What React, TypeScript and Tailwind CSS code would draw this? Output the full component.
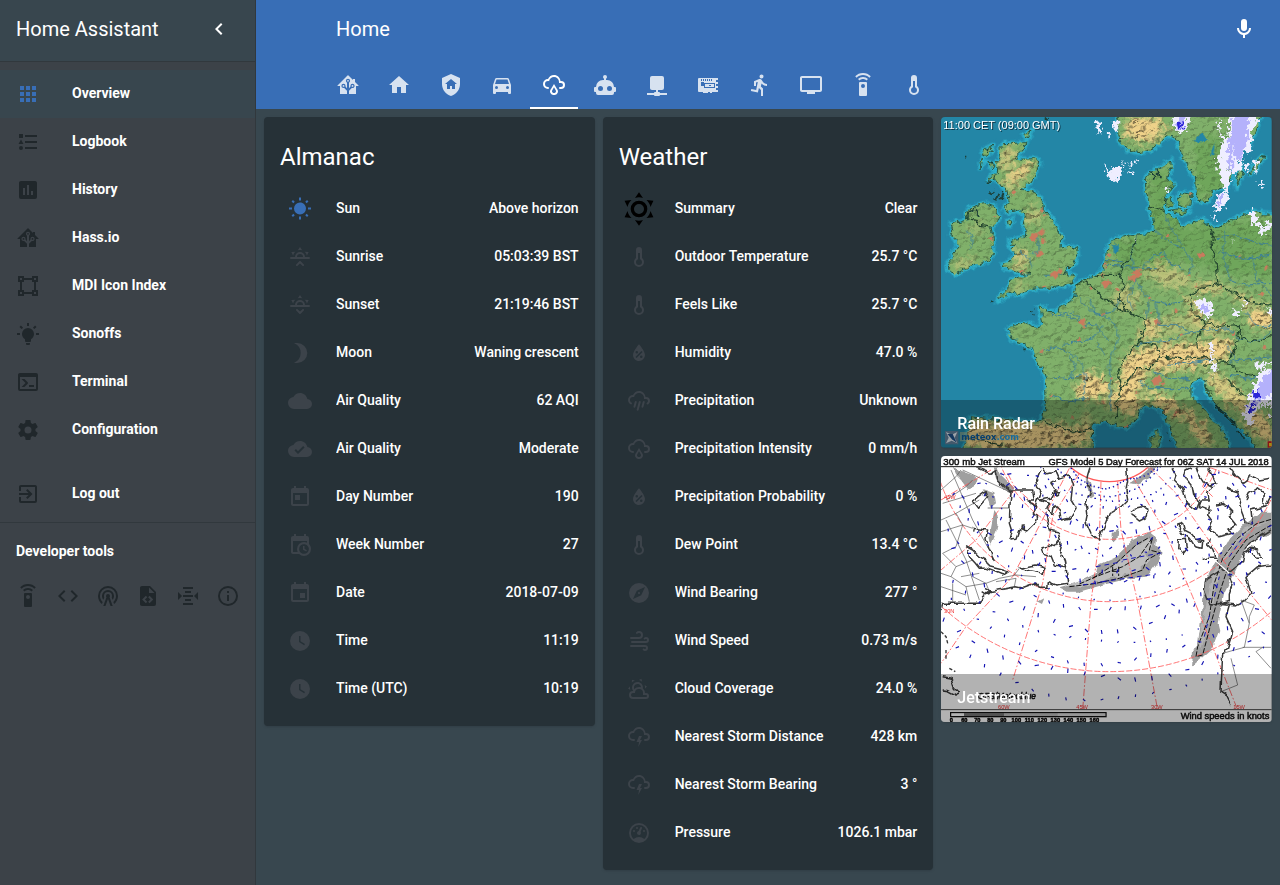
import React from 'react';

const cloudTop =
  'M6,16A5,5 0 0,1 1,11A5,5 0 0,1 6,6C7,3.65 9.3,2 12,2C15.43,2 18.24,4.66 18.5,8.03L19,8A4,4 0 0,1 23,12A4,4 0 0,1 19,16H18A1,1 0 0,1 17,15A1,1 0 0,1 18,14H19A2,2 0 0,0 21,12A2,2 0 0,0 19,10H17V9A5,5 0 0,0 12,4C9.5,4 7.45,5.82 7.06,8.19C6.73,8.07 6.37,8 6,8A3,3 0 0,0 3,11A3,3 0 0,0 6,14';
const horizon =
  'M3,12H7A5,5 0 0,1 12,7A5,5 0 0,1 17,12H21A1,1 0 0,1 22,13A1,1 0 0,1 21,14H3A1,1 0 0,1 2,13A1,1 0 0,1 3,12M15,12A3,3 0 0,0 12,9A3,3 0 0,0 9,12H15M12,2L14.39,5.42C13.65,5.15 12.84,5 12,5C11.16,5 10.35,5.15 9.61,5.42L12,2M3.34,7L7.5,6.65C6.9,7.16 6.36,7.78 5.94,8.5C5.5,9.24 5.25,10 5.11,10.79L3.34,7M20.65,7L18.88,10.79C18.74,10 18.47,9.23 18.05,8.5C17.63,7.78 17.1,7.15 16.5,6.64L20.65,7';
const cloudSolid =
  'M19.35,10.03C18.67,6.59 15.64,4 12,4C9.11,4 6.6,5.64 5.35,8.03C2.34,8.36 0,10.9 0,14A6,6 0 0,0 6,20H19A5,5 0 0,0 24,15C24,12.36 21.95,10.22 19.35,10.03Z';

const icons = {
  apps: 'M16,20H20V16H16M16,14H20V10H16M10,8H14V4H10M16,8H20V4H16M10,14H14V10H10M4,14H8V10H4M4,20H8V16H4M10,20H14V16H10M4,8H8V4H4V8Z',
  list: 'M5,9.5L7.5,14H2.5L5,9.5M3,4H7V8H3V4M5,20A2,2 0 0,0 7,18A2,2 0 0,0 5,16A2,2 0 0,0 3,18A2,2 0 0,0 5,20M9,5V7H21V5H9M9,19H21V17H9V19M9,13H21V11H9V13Z',
  poll: 'M17,17H15V13H17M13,17H11V7H13M9,17H7V10H9M19,3H5C3.89,3 3,3.89 3,5V19A2,2 0 0,0 5,21H19A2,2 0 0,0 21,19V5C21,3.89 20.1,3 19,3Z',
  assistant:
    'M21.8,13H20V21H13V17.67L15.79,14.88L16.5,15C17.66,15 18.6,14.06 18.6,12.9C18.6,11.74 17.66,10.8 16.5,10.8A2.1,2.1 0 0,0 14.4,12.9L14.5,13.61L13,15.13V9.65C13.66,9.29 14.1,8.6 14.1,7.8A2.1,2.1 0 0,0 12,5.7A2.1,2.1 0 0,0 9.9,7.8C9.9,8.6 10.34,9.29 11,9.65V15.13L9.5,13.61L9.6,12.9A2.1,2.1 0 0,0 7.5,10.8A2.1,2.1 0 0,0 5.4,12.9A2.1,2.1 0 0,0 7.5,15L8.21,14.88L11,17.67V21H4V13H2.25C1.83,13 1.42,13 1.42,12.79C1.43,12.57 1.85,12.15 2.28,11.72L11,3C11.33,2.67 11.67,2.33 12,2.33C12.33,2.33 12.67,2.67 13,3L17,7V6H19V9L21.78,11.78C22.18,12.18 22.59,12.59 22.6,12.8C22.6,13 22.2,13 21.8,13M7.5,12A0.9,0.9 0 0,1 8.4,12.9A0.9,0.9 0 0,1 7.5,13.8A0.9,0.9 0 0,1 6.6,12.9A0.9,0.9 0 0,1 7.5,12M16.5,12C17,12 17.4,12.4 17.4,12.9C17.4,13.4 17,13.8 16.5,13.8A0.9,0.9 0 0,1 15.6,12.9A0.9,0.9 0 0,1 16.5,12M12,6.9C12.5,6.9 12.9,7.3 12.9,7.8C12.9,8.3 12.5,8.7 12,8.7C11.5,8.7 11.1,8.3 11.1,7.8C11.1,7.3 11.5,6.9 12,6.9Z',
  vector:
    'M2,2H8V4H16V2H22V8H20V16H22V22H16V20H8V22H2V16H4V8H2V2M16,8V6H8V8H6V16H8V18H16V16H18V8H16M4,4V6H6V4H4M18,4V6H20V4H18M4,18V20H6V18H4M18,18V20H20V18H18Z',
  bulb: 'M12,6A6,6 0 0,1 18,12C18,14.22 16.79,16.16 15,17.2V19A1,1 0 0,1 14,20H10A1,1 0 0,1 9,19V17.2C7.21,16.16 6,14.22 6,12A6,6 0 0,1 12,6M14,21V22A1,1 0 0,1 13,23H11A1,1 0 0,1 10,22V21H14M20,11H23V13H20V11M1,11H4V13H1V11M13,1V4H11V1H13M4.92,3.5L7.05,5.64L5.63,7.05L3.5,4.93L4.92,3.5M16.95,5.63L19.07,3.5L20.5,4.93L18.37,7.05L16.95,5.63Z',
  console:
    'M20,19V7H4V19H20M20,3A2,2 0 0,1 22,5V19A2,2 0 0,1 20,21H4A2,2 0 0,1 2,19V5C2,3.89 2.9,3 4,3H20M13,17V15H18V17H13M9.58,13L5.57,9H8.4L11.7,12.3C12.09,12.69 12.09,13.33 11.7,13.72L8.42,17H5.59L9.58,13Z',
  settings:
    'M12,15.5A3.5,3.5 0 0,1 8.5,12A3.5,3.5 0 0,1 12,8.5A3.5,3.5 0 0,1 15.5,12A3.5,3.5 0 0,1 12,15.5M19.43,12.97C19.47,12.65 19.5,12.33 19.5,12C19.5,11.67 19.47,11.34 19.43,11L21.54,9.37C21.73,9.22 21.78,8.95 21.66,8.73L19.66,5.27C19.54,5.05 19.27,4.96 19.05,5.05L16.56,6.05C16.04,5.66 15.5,5.32 14.87,5.07L14.5,2.42C14.46,2.18 14.25,2 14,2H10C9.75,2 9.54,2.18 9.5,2.42L9.13,5.07C8.5,5.32 7.96,5.66 7.44,6.05L4.95,5.05C4.73,4.96 4.46,5.05 4.34,5.27L2.34,8.73C2.21,8.95 2.27,9.22 2.46,9.37L4.57,11C4.53,11.34 4.5,11.67 4.5,12C4.5,12.33 4.53,12.65 4.57,12.97L2.46,14.63C2.27,14.78 2.21,15.05 2.34,15.27L4.34,18.73C4.46,18.95 4.73,19.03 4.95,18.95L7.44,17.94C7.96,18.34 8.5,18.68 9.13,18.93L9.5,21.58C9.54,21.82 9.75,22 10,22H14C14.25,22 14.46,21.82 14.5,21.58L14.87,18.93C15.5,18.67 16.04,18.34 16.56,17.94L19.05,18.95C19.27,19.03 19.54,18.95 19.66,18.73L21.66,15.27C21.78,15.05 21.73,14.78 21.54,14.63L19.43,12.97Z',
  exit: 'M19,3H5C3.89,3 3,3.89 3,5V9H5V5H19V19H5V15H3V19A2,2 0 0,0 5,21H19A2,2 0 0,0 21,19V5C21,3.89 20.1,3 19,3M10.08,15.58L11.5,17L16.5,12L11.5,7L10.08,8.41L12.67,11H3V13H12.67L10.08,15.58Z',
  remote:
    'M12,0C8.96,0 6.21,1.23 4.22,3.22L5.63,4.63C7.26,3 9.5,2 12,2C14.5,2 16.74,3 18.36,4.64L19.77,3.23C17.79,1.23 15.04,0 12,0M7.05,6.05L8.46,7.46C9.37,6.56 10.62,6 12,6C13.38,6 14.63,6.56 15.54,7.46L16.95,6.05C15.68,4.78 13.93,4 12,4C10.07,4 8.32,4.78 7.05,6.05M12,15A2,2 0 0,1 10,13A2,2 0 0,1 12,11A2,2 0 0,1 14,13A2,2 0 0,1 12,15M15,9H9A1,1 0 0,0 8,10V22A1,1 0 0,0 9,23H15A1,1 0 0,0 16,22V10A1,1 0 0,0 15,9Z',
  code: 'M14.6,16.6L19.2,12L14.6,7.4L16,6L22,12L16,18L14.6,16.6M9.4,16.6L4.8,12L9.4,7.4L8,6L2,12L8,18L9.4,16.6Z',
  tower:
    'M12,10A2,2 0 0,1 14,12C14,12.5 13.82,12.94 13.53,13.29L16.7,22H14.57L12,14.93L9.43,22H7.3L10.47,13.29C10.18,12.94 10,12.5 10,12A2,2 0 0,1 12,10M12,8A4,4 0 0,0 8,12C8,12.5 8.1,13 8.28,13.46L7.4,15.86C6.53,14.81 6,13.47 6,12A6,6 0 0,1 12,6A6,6 0 0,1 18,12C18,13.47 17.47,14.81 16.6,15.86L15.72,13.46C15.9,13 16,12.5 16,12A4,4 0 0,0 12,8M12,4A8,8 0 0,0 4,12C4,14.36 5,16.5 6.64,17.94L5.92,19.94C3.54,18.11 2,15.23 2,12A10,10 0 0,1 12,2A10,10 0 0,1 22,12C22,15.23 20.46,18.11 18.08,19.94L17.36,17.94C19,16.5 20,14.36 20,12A8,8 0 0,0 12,4Z',
  fileCode:
    'M13,9H18.5L13,3.5V9M6,2H14L20,8V20A2,2 0 0,1 18,22H6C4.89,22 4,21.1 4,20V4C4,2.89 4.89,2 6,2M6.12,15.5L9.86,19.24L11.28,17.83L8.95,15.5L11.28,13.17L9.86,11.76L6.12,15.5M17.28,15.5L13.54,11.76L12.12,13.17L14.45,15.5L12.12,17.83L13.54,19.24L17.28,15.5Z',
  altimeter:
    'M7,3V5H17V3H7M9,7V9H15V7H9M2,7.96V16.04L6.03,12L2,7.96M22.03,7.96L18,12L22.03,16.04V7.96M7,11V13H17V11H7M9,15V17H15V15H9M7,19V21H17V19H7Z',
  info: 'M11,9H13V7H11M12,20C7.59,20 4,16.41 4,12C4,7.59 7.59,4 12,4C16.41,4 20,7.59 20,12C20,16.41 16.41,20 12,20M12,2A10,10 0 0,0 2,12A10,10 0 0,0 12,22A10,10 0 0,0 22,12A10,10 0 0,0 12,2M11,17H13V11H11V17Z',
  home: 'M10,20V14H14V20H19V12H22L12,3L2,12H5V20H10Z',
  shieldHome:
    'M11,13H13V16H16V11H18L12,6L6,11H8V16H11V13M12,1L21,5V11C21,16.55 17.16,21.74 12,23C6.84,21.74 3,16.55 3,11V5L12,1Z',
  car: 'M5,11L6.5,6.5H17.5L19,11M17.5,16A1.5,1.5 0 0,1 16,14.5A1.5,1.5 0 0,1 17.5,13A1.5,1.5 0 0,1 19,14.5A1.5,1.5 0 0,1 17.5,16M6.5,16A1.5,1.5 0 0,1 5,14.5A1.5,1.5 0 0,1 6.5,13A1.5,1.5 0 0,1 8,14.5A1.5,1.5 0 0,1 6.5,16M18.92,6C18.72,5.42 18.16,5 17.5,5H6.5C5.84,5 5.28,5.42 5.08,6L3,12V20A1,1 0 0,0 4,21H5A1,1 0 0,0 6,20V19H18V20A1,1 0 0,0 19,21H20A1,1 0 0,0 21,20V12L18.92,6Z',
  rainy:
    cloudTop +
    'A1,1 0 0,1 7,15A1,1 0 0,1 6,16M14.83,15.67C16.39,17.23 16.39,19.5 14.83,21.08C14.05,21.86 13,22 12,22C11,22 9.95,21.86 9.17,21.08C7.61,19.5 7.61,17.23 9.17,15.67L12,11L14.83,15.67M13.41,16.69L12,14.25L10.59,16.69C9.8,17.5 9.8,18.7 10.59,19.5C11,19.93 11.5,20 12,20C12.5,20 13,19.93 13.41,19.5C14.2,18.7 14.2,17.5 13.41,16.69Z',
  robot:
    'M12,2A2,2 0 0,1 14,4C14,4.74 13.6,5.39 13,5.73V7H14A7,7 0 0,1 21,14H22A1,1 0 0,1 23,15V18A1,1 0 0,1 22,19H21V20A2,2 0 0,1 19,22H5A2,2 0 0,1 3,20V19H2A1,1 0 0,1 1,18V15A1,1 0 0,1 2,14H3A7,7 0 0,1 10,7H11V5.73C10.4,5.39 10,4.74 10,4A2,2 0 0,1 12,2M7.5,13A2.5,2.5 0 0,0 5,15.5A2.5,2.5 0 0,0 7.5,18A2.5,2.5 0 0,0 10,15.5A2.5,2.5 0 0,0 7.5,13M16.5,13A2.5,2.5 0 0,0 14,15.5A2.5,2.5 0 0,0 16.5,18A2.5,2.5 0 0,0 19,15.5A2.5,2.5 0 0,0 16.5,13Z',
  network:
    'M17,3A2,2 0 0,1 19,5V15A2,2 0 0,1 17,17H13V19H14A1,1 0 0,1 15,20H22V22H15A1,1 0 0,1 14,23H10A1,1 0 0,1 9,22H2V20H9A1,1 0 0,1 10,19H11V17H7C5.89,17 5,16.1 5,15V5A2,2 0 0,1 7,3H17Z',
  board:
    'M3,5H22V7H20V9H22V11H20V13H22V15H20V17H22V19H16V20H14V19H12V20H7V19H3A1,1 0 0,1 2,18V6A1,1 0 0,1 3,5ZM5,6V8H6V6ZM7,6V8H8V6ZM9,6V8H10V6ZM11,6V8H12V6ZM13,6V8H14V6ZM15,6V8H16V6ZM5,9V13H8V15H19V10H8V9ZM9,11H18V14H9ZM13,12V13H15V12Z',
  run: 'M13.5,5.5A2,2 0 0,0 15.5,3.5A2,2 0 0,0 13.5,1.5A2,2 0 0,0 11.5,3.5A2,2 0 0,0 13.5,5.5M9.89,19.38L10.89,15L13,17V23H15V15.5L12.89,13.5L13.5,10.5C14.79,12 16.79,13 19,13V11C17.09,11 15.5,10 14.69,8.58L13.69,7C13.29,6.38 12.69,6 12,6C11.69,6 11.5,6.08 11.19,6.08L6,8.28V13H8V9.58L9.79,8.88L8.19,17L3.29,16L2.89,18L9.89,19.38Z',
  tv: 'M21,3H3C1.9,3 1,3.9 1,5V17C1,18.1 1.9,19 3,19H8V21H16V19H21C22.1,19 23,18.1 23,17V5C23,3.9 22.1,3 21,3M21,17H3V5H21V17Z',
  thermometer:
    'M17,17A5,5 0 0,1 12,22A5,5 0 0,1 7,17C7,15.36 7.79,13.91 9,13V5A3,3 0 0,1 12,2A3,3 0 0,1 15,5V13C16.21,13.91 17,15.36 17,17M11,8V14.17C9.83,14.58 9,15.69 9,17A3,3 0 0,0 12,20A3,3 0 0,0 15,17C15,15.69 14.17,14.58 13,14.17V8H11Z',
  mic: 'M12,2A3,3 0 0,1 15,5V11A3,3 0 0,1 12,14A3,3 0 0,1 9,11V5A3,3 0 0,1 12,2M19,11C19,14.53 16.39,17.44 13,17.93V21H11V17.93C7.61,17.44 5,14.53 5,11H7A5,5 0 0,0 12,16A5,5 0 0,0 17,11H19Z',
  chevronLeft: 'M15.41,16.58L10.83,12L15.41,7.41L14,6L8,12L14,18L15.41,16.58Z',
  sun: 'M3.55,18.54L4.96,19.95L6.76,18.16L5.34,16.74M11,22.45C11.32,22.45 13,22.45 13,22.45V19.5H11M12,5.5A6,6 0 0,0 6,11.5A6,6 0 0,0 12,17.5A6,6 0 0,0 18,11.5C18,8.18 15.31,5.5 12,5.5M20,12.5H23V10.5H20M17.24,18.16L19.04,19.95L20.45,18.54L18.66,16.74M20.45,4.46L19.04,3.05L17.24,4.84L18.66,6.26M13,0.55H11V3.5H13M4,10.5H1V12.5H4M6.76,4.84L4.96,3.05L3.55,4.46L5.34,6.26L6.76,4.84Z',
  sunrise:
    horizon +
    'M12.71,16.3L15.82,19.41C16.21,19.8 16.21,20.43 15.82,20.82C15.43,21.21 14.8,21.21 14.41,20.82L12,18.41L9.59,20.82C9.2,21.21 8.57,21.21 8.18,20.82C7.79,20.43 7.79,19.8 8.18,19.41L11.29,16.3C11.5,16.1 11.74,16 12,16C12.26,16 12.5,16.1 12.71,16.3Z',
  sunset:
    horizon +
    'M12.71,20.71L15.82,17.6C16.21,17.21 16.21,16.57 15.82,16.18C15.43,15.79 14.8,15.79 14.41,16.18L12,18.59L9.59,16.18C9.2,15.79 8.57,15.79 8.18,16.18C7.79,16.57 7.79,17.21 8.18,17.6L11.29,20.71C11.5,20.9 11.74,21 12,21C12.26,21 12.5,20.9 12.71,20.71Z',
  moon: 'M6,2.3C7,2 8,2 9.3,2A10,10 0 0,1 9.3,22C8,22 7,22 6,21.7A10.4,10.4 0 0,0 6,2.3Z',
  cloud: cloudSolid,
  cloudCheck: cloudSolid + 'M10,17L6.5,13.5L7.91,12.08L10,14.17L15.18,9L16.59,10.41L10,17Z',
  calendarToday:
    'M7,10H12V15H7M19,19H5V8H19M19,3H18V1H16V3H8V1H6V3H5C3.89,3 3,3.9 3,5V19A2,2 0 0,0 5,21H19A2,2 0 0,0 21,19V5A2,2 0 0,0 19,3Z',
  calendarClock:
    'M15,13H16.5V15.82L18.94,17.23L18.19,18.53L15,16.69V13M19,8H5V19H9.67C9.24,18.09 9,17.07 9,16A7,7 0 0,1 16,9C17.07,9 18.09,9.24 19,9.67V8M5,21C3.89,21 3,20.1 3,19V5C3,3.89 3.89,3 5,3H6V1H8V3H16V1H18V3H19A2,2 0 0,1 21,5V11.1C22.24,12.36 23,14.09 23,16A7,7 0 0,1 16,23C14.09,23 12.36,22.24 11.1,21H5M16,11.15A4.85,4.85 0 0,0 11.15,16C11.15,18.68 13.32,20.85 16,20.85A4.85,4.85 0 0,0 20.85,16C20.85,13.32 18.68,11.15 16,11.15Z',
  calendar:
    'M19,19H5V8H19M16,1V3H8V1H6V3H5C3.89,3 3,3.89 3,5V19A2,2 0 0,0 5,21H19A2,2 0 0,0 21,19V5C21,3.89 20.1,3 19,3H18V1M17,12H12V17H17V12Z',
  clock:
    'M12,2A10,10 0 0,0 2,12A10,10 0 0,0 12,22A10,10 0 0,0 22,12A10,10 0 0,0 12,2M16.2,16.2L11,13V7H12.5V12.2L17,14.9L16.2,16.2Z',
  sunny:
    'M12,7A5,5 0 0,1 17,12A5,5 0 0,1 12,17A5,5 0 0,1 7,12A5,5 0 0,1 12,7M12,9A3,3 0 0,0 9,12A3,3 0 0,0 12,15A3,3 0 0,0 15,12A3,3 0 0,0 12,9M12,2L14.39,5.42C13.65,5.15 12.84,5 12,5C11.16,5 10.35,5.15 9.61,5.42L12,2M3.34,7L7.5,6.65C6.9,7.16 6.36,7.78 5.94,8.5C5.5,9.24 5.25,10 5.11,10.79L3.34,7M3.36,17L5.12,13.23C5.26,14 5.53,14.78 5.95,15.5C6.37,16.24 6.91,16.86 7.5,17.37L3.36,17M20.65,7L18.88,10.79C18.74,10 18.47,9.23 18.05,8.5C17.63,7.78 17.1,7.15 16.5,6.64L20.65,7M20.64,17L16.5,17.36C17.09,16.85 17.62,16.22 18.04,15.5C18.46,14.77 18.73,14 18.87,13.21L20.64,17M12,22L9.59,18.56C10.33,18.83 11.14,19 12,19C12.82,19 13.63,18.83 14.37,18.56L12,22Z',
  waterPercent:
    'M12,3.25C12,3.25 6,10 6,14C6,17.32 8.69,20 12,20A6,6 0 0,0 18,14C18,10 12,3.25 12,3.25M14.47,9.97L15.53,11.03L9.53,17.03L8.47,15.97M9.75,10A1.25,1.25 0 0,1 11,11.25A1.25,1.25 0 0,1 9.75,12.5A1.25,1.25 0 0,1 8.5,11.25A1.25,1.25 0 0,1 9.75,10M14.25,14.5A1.25,1.25 0 0,1 15.5,15.75A1.25,1.25 0 0,1 14.25,17A1.25,1.25 0 0,1 13,15.75A1.25,1.25 0 0,1 14.25,14.5Z',
  pouring:
    'M9,12C9.53,12.14 9.85,12.69 9.71,13.22L8.41,18.05C8.27,18.59 7.72,18.9 7.19,18.76C6.65,18.62 6.34,18.07 6.5,17.54L7.78,12.71C7.92,12.17 8.47,11.86 9,12M13,12C13.53,12.14 13.85,12.69 13.71,13.22L11.64,20.95C11.5,21.5 10.95,21.8 10.41,21.66C9.88,21.5 9.56,20.97 9.7,20.43L11.78,12.71C11.92,12.17 12.47,11.86 13,12M17,12C17.53,12.14 17.85,12.69 17.71,13.22L16.41,18.05C16.27,18.59 15.72,18.9 15.19,18.76C14.65,18.62 14.34,18.07 14.5,17.54L15.78,12.71C15.92,12.17 16.47,11.86 17,12M17,10V9A5,5 0 0,0 12,4C9.5,4 7.45,5.82 7.06,8.19C6.73,8.07 6.37,8 6,8A3,3 0 0,0 3,11C3,12.11 3.6,13.08 4.5,13.6V13.59C5,13.87 5.14,14.5 4.87,14.96C4.59,15.43 4,15.6 3.5,15.32V15.33C2,14.47 1,12.85 1,11A5,5 0 0,1 6,6C7,3.65 9.3,2 12,2C15.43,2 18.24,4.66 18.5,8.03L19,8A4,4 0 0,1 23,12C23,13.5 22.2,14.77 21,15.46V15.46C20.5,15.73 19.91,15.57 19.63,15.09C19.36,14.61 19.5,14 20,13.72V13.73C20.6,13.39 21,12.74 21,12A2,2 0 0,0 19,10H17Z',
  compass:
    'M14.19,14.19L6,18L9.81,9.81L18,6M12,2A10,10 0 0,0 2,12A10,10 0 0,0 12,22A10,10 0 0,0 22,12A10,10 0 0,0 12,2M12,10.9A1.1,1.1 0 0,0 10.9,12A1.1,1.1 0 0,0 12,13.1A1.1,1.1 0 0,0 13.1,12A1.1,1.1 0 0,0 12,10.9Z',
  windy:
    'M4,10A1,1 0 0,1 3,9A1,1 0 0,1 4,8H12A2,2 0 0,0 14,6A2,2 0 0,0 12,4C11.45,4 10.95,4.22 10.59,4.59C10.2,5 9.56,5 9.17,4.59C8.78,4.2 8.78,3.56 9.17,3.17C9.9,2.45 10.9,2 12,2A4,4 0 0,1 16,6A4,4 0 0,1 12,10H4M19,12A1,1 0 0,0 20,11A1,1 0 0,0 19,10C18.72,10 18.47,10.11 18.29,10.29C17.9,10.68 17.27,10.68 16.88,10.29C16.5,9.9 16.5,9.27 16.88,8.88C17.42,8.34 18.17,8 19,8A3,3 0 0,1 22,11A3,3 0 0,1 19,14H5A1,1 0 0,1 4,13A1,1 0 0,1 5,12H19M18,18H4A1,1 0 0,1 3,17A1,1 0 0,1 4,16H18A3,3 0 0,1 21,19A3,3 0 0,1 18,22C17.17,22 16.42,21.66 15.88,21.12C15.5,20.73 15.5,20.1 15.88,19.71C16.27,19.32 16.9,19.32 17.29,19.71C17.47,19.89 17.72,20 18,20A1,1 0 0,0 19,19A1,1 0 0,0 18,18Z',
  partlyCloudy:
    'M12.74,5.47C15.1,6.5 16.35,9.03 15.92,11.46C17.19,12.56 18,14.19 18,16V16.17C18.31,16.06 18.65,16 19,16A3,3 0 0,1 22,19A3,3 0 0,1 19,22H6A4,4 0 0,1 2,18A4,4 0 0,1 6,14H6.27C5,12.45 4.6,10.24 5.5,8.26C6.72,5.5 9.97,4.24 12.74,5.47M11.93,7.3C10.16,6.5 8.09,7.31 7.31,9.07C6.85,10.09 6.93,11.22 7.41,12.13C8.5,10.83 10.16,10 12,10C12.7,10 13.38,10.12 14,10.34C13.94,9.06 13.18,7.86 11.93,7.3M13.55,3.64C13,3.4 12.45,3.23 11.88,3.12L14.37,1.82L15.27,4.71C14.76,4.29 14.19,3.93 13.55,3.64M6.09,4.44C5.6,4.79 5.17,5.19 4.8,5.63L4.91,2.82L7.87,3.5C7.25,3.71 6.65,4.03 6.09,4.44M18,9.71C17.91,9.12 17.78,8.55 17.59,8L19.97,9.5L17.92,11.73C18.03,11.08 18.05,10.4 18,9.71M3.04,11.3C3.11,11.9 3.24,12.47 3.43,13L1.06,11.5L3.1,9.28C3,9.93 2.97,10.61 3.04,11.3M19,18H16V16A4,4 0 0,0 12,12A4,4 0 0,0 8,16H6A2,2 0 0,0 4,18A2,2 0 0,0 6,20H19A1,1 0 0,0 20,19A1,1 0 0,0 19,18Z',
  lightning:
    cloudTop + 'H7A1,1 0 0,1 8,15A1,1 0 0,1 7,16H6M12,11H15L13,15H15L11.25,22L12,17H9.5L12,11Z',
  gauge:
    'M12,2A10,10 0 0,0 2,12A10,10 0 0,0 12,22A10,10 0 0,0 22,12A10,10 0 0,0 12,2M12,4A8,8 0 0,1 20,12C20,14.4 19,16.5 17.3,18C15.9,16.7 14,16 12,16C10,16 8.2,16.7 6.7,18C5,16.5 4,14.4 4,12A8,8 0 0,1 12,4M14,5.89C13.62,5.9 13.26,6.15 13.1,6.54L11.81,9.77L11.71,10C11,10.13 10.41,10.6 10.14,11.26C9.73,12.29 10.23,13.45 11.26,13.86C12.29,14.27 13.45,13.77 13.86,12.74C14.12,12.08 14,11.32 13.57,10.76L13.67,10.5L14.96,7.29L14.97,7.26C15.17,6.75 14.92,6.17 14.41,5.96C14.28,5.91 14.15,5.89 14,5.89M10,6A1,1 0 0,0 9,7A1,1 0 0,0 10,8A1,1 0 0,0 11,7A1,1 0 0,0 10,6M7,9A1,1 0 0,0 6,10A1,1 0 0,0 7,11A1,1 0 0,0 8,10A1,1 0 0,0 7,9M17,9A1,1 0 0,0 16,10A1,1 0 0,0 17,11A1,1 0 0,0 18,10A1,1 0 0,0 17,9Z',
};

type IconName = keyof typeof icons;

function Icon({ name, className = 'size-6' }: { name: IconName; className?: string }) {
  return (
    <svg viewBox="0 0 24 24" className={`block shrink-0 fill-current ${className}`} aria-hidden="true">
      <path d={icons[name]} fillRule="evenodd" />
    </svg>
  );
}

const navItems: { icon: IconName; label: string }[] = [
  { icon: 'apps', label: 'Overview' },
  { icon: 'list', label: 'Logbook' },
  { icon: 'poll', label: 'History' },
  { icon: 'assistant', label: 'Hass.io' },
  { icon: 'vector', label: 'MDI Icon Index' },
  { icon: 'bulb', label: 'Sonoffs' },
  { icon: 'console', label: 'Terminal' },
  { icon: 'settings', label: 'Configuration' },
];

const devTools: { icon: IconName; label: string }[] = [
  { icon: 'remote', label: 'Services' },
  { icon: 'code', label: 'States' },
  { icon: 'tower', label: 'Events' },
  { icon: 'fileCode', label: 'Templates' },
  { icon: 'altimeter', label: 'MQTT' },
  { icon: 'info', label: 'Info' },
];

const tabs: { icon: IconName; label: string }[] = [
  { icon: 'assistant', label: 'Home Assistant' },
  { icon: 'home', label: 'House' },
  { icon: 'shieldHome', label: 'Security' },
  { icon: 'car', label: 'Car' },
  { icon: 'rainy', label: 'Weather' },
  { icon: 'robot', label: 'Automation' },
  { icon: 'network', label: 'Network' },
  { icon: 'board', label: 'System' },
  { icon: 'run', label: 'Motion' },
  { icon: 'tv', label: 'Media' },
  { icon: 'remote', label: 'Remotes' },
  { icon: 'thermometer', label: 'Climate' },
];

type Row = [icon: IconName, name: string, value: string];

const almanac: Row[] = [
  ['sun', 'Sun', 'Above horizon'],
  ['sunrise', 'Sunrise', '05:03:39 BST'],
  ['sunset', 'Sunset', '21:19:46 BST'],
  ['moon', 'Moon', 'Waning crescent'],
  ['cloud', 'Air Quality', '62 AQI'],
  ['cloudCheck', 'Air Quality', 'Moderate'],
  ['calendarToday', 'Day Number', '190'],
  ['calendarClock', 'Week Number', '27'],
  ['calendar', 'Date', '2018-07-09'],
  ['clock', 'Time', '11:19'],
  ['clock', 'Time (UTC)', '10:19'],
];

const weather: Row[] = [
  ['sunny', 'Summary', 'Clear'],
  ['thermometer', 'Outdoor Temperature', '25.7 °C'],
  ['thermometer', 'Feels Like', '25.7 °C'],
  ['waterPercent', 'Humidity', '47.0 %'],
  ['pouring', 'Precipitation', 'Unknown'],
  ['rainy', 'Precipitation Intensity', '0 mm/h'],
  ['waterPercent', 'Precipitation Probability', '0 %'],
  ['thermometer', 'Dew Point', '13.4 °C'],
  ['compass', 'Wind Bearing', '277 °'],
  ['windy', 'Wind Speed', '0.73 m/s'],
  ['partlyCloudy', 'Cloud Coverage', '24.0 %'],
  ['lightning', 'Nearest Storm Distance', '428 km'],
  ['lightning', 'Nearest Storm Bearing', '3 °'],
  ['gauge', 'Pressure', '1026.1 mbar'],
];

function rowIconClass(name: IconName) {
  if (name === 'sun') return 'size-6 text-[#386eb6]';
  if (name === 'sunny') return 'size-10 text-black';
  return 'size-6 text-[#3c434a]';
}

function EntitiesCard({ title, rows }: { title: string; rows: Row[] }) {
  return (
    <section className="rounded-sm bg-[#263137] px-4 pt-6 pb-[13px] shadow">
      <h2 className="pb-3 text-2xl leading-8">{title}</h2>
      <ul>
        {rows.map(([icon, name, value], i) => (
          <li key={i} className="flex h-12 items-center text-sm font-medium">
            <span className="flex w-10 shrink-0 justify-center">
              <Icon name={icon} className={rowIconClass(icon)} />
            </span>
            <span className="ml-4 flex-1 truncate pb-0.5">{name}</span>
            <span className="ml-2 pb-0.5 whitespace-nowrap">{value}</span>
          </li>
        ))}
      </ul>
    </section>
  );
}

function PictureCard({ title, children }: { title: string; children: React.ReactNode }) {
  return (
    <section className="relative overflow-hidden rounded-sm shadow">
      {children}
      <h2 className="absolute inset-x-0 bottom-0 flex h-12 items-center bg-black/30 px-4 text-base leading-4 font-medium">
        {title}
      </h2>
    </section>
  );
}

const britain =
  'M205,95L270,92L262,112L238,135L245,142L300,140L310,152L300,185L285,210L262,228L250,236L285,236L300,245L318,265L322,290L345,318L362,345L378,378L372,405L400,402L422,410L425,430L412,455L395,472L385,485L412,490L410,510L385,522L340,528L310,528L275,535L255,548L235,545L220,540L205,555L188,563L195,550L215,530L225,505L245,495L272,490L285,480L262,488L235,475L205,468L200,460L215,452L235,430L228,410L240,400L222,400L220,385L245,380L268,375L270,350L262,330L268,312L250,300L255,290L235,298L212,300L205,290L220,270L212,235L200,225L190,210L170,205L185,180L180,155L195,130L192,110Z';
const ireland =
  'M95,290L130,278L150,275L175,285L190,310L180,335L165,345L172,380L170,420L165,440L130,455L100,465L60,485L40,478L35,455L55,435L50,425L70,400L60,385L45,370L50,355L45,335L75,330L100,322L90,305Z';
const continent =
  'M215,652L235,640L270,632L300,645L320,640L315,600L308,585L328,588L335,602L370,600L372,585L400,570L417,555L418,520L440,505L475,495L495,480L510,450L515,410L530,385L560,375L600,370L640,365L655,350L650,320L640,290L640,265L630,240L628,200L645,180L675,165L705,145L705,165L695,200L715,215L700,235L690,260L680,280L690,300L720,325L735,345L765,335L795,320L820,340L845,348L880,330L920,310L955,298L980,305L1030,310V1030H975L930,965L880,915L845,885L820,850L808,805L795,800L765,815L765,850L800,890L830,925L865,960L885,1030H735L700,940L680,900L650,880L620,885L600,925L570,948L535,940L500,925L470,945L468,1030H80L95,960L105,915L160,920L220,925L300,930L320,920L330,860L328,800L320,770L300,745L290,710L260,695L225,680Z';
const scandinavia =
  'M548,-10L545,60L550,90L580,115L610,122L650,112L690,75L705,70L720,80L735,120L755,160L780,205L780,240L785,265L820,270L830,235L875,225L885,190L890,150L900,110L940,100L960,50L985,-10Z';
const islands =
  'M725,255L745,240L768,245L765,275L750,290L730,280ZM685,268L705,260L712,278L695,288ZM700,295L730,290L755,300L735,308ZM215,330L228,322L225,340L217,342ZM900,195L915,165L920,180L905,220ZM645,975L668,955L672,990L665,1030H645ZM140,115L168,100L165,120L145,135ZM132,150L140,145L135,170ZM155,150L175,155L170,170ZM165,190L180,185L178,200L160,205ZM262,68L285,55L275,80ZM940,190L960,150L985,130L965,165ZM808,820L830,850L820,855Z';
const land = [britain, ireland, continent, scandinavia, islands].join('');

type Ridge = [x: number, y: number, rx: number, ry: number, angle: number, opacity: number];

const hills: Ridge[] = [
  [625, 50, 60, 40, 0, 1],
  [215, 135, 18, 42, 15, 0.7],
  [255, 178, 46, 16, -25, 1],
  [225, 212, 30, 14, -20, 0.7],
  [255, 440, 22, 32, 0, 0.7],
  [290, 312, 18, 30, 20, 0.6],
  [120, 350, 26, 16, 0, 0.25],
  [80, 458, 34, 12, -20, 0.5],
  [245, 530, 30, 9, 0, 0.5],
  [585, 800, 34, 80, 20, 1],
  [705, 735, 150, 42, -6, 1],
  [845, 715, 50, 32, -30, 1],
  [470, 825, 46, 44, 0, 1],
  [640, 655, 46, 20, -50, 0.9],
  [720, 640, 60, 30, 0, 0.4],
  [570, 560, 40, 34, 20, 0.5],
  [690, 490, 70, 30, 20, 0.55],
  [820, 527, 60, 12, 0, 0.9],
  [775, 600, 14, 50, -20, 0.9],
  [830, 645, 50, 16, 0, 0.8],
  [980, 620, 46, 34, 0, 1],
  [920, 560, 40, 12, 30, 0.9],
  [250, 975, 220, 44, 0, 1],
  [700, 880, 84, 20, 30, 1],
  [785, 950, 64, 18, 55, 1],
  [890, 850, 110, 26, 40, 0.8],
  [975, 940, 64, 28, 50, 1],
  [140, 950, 60, 30, 0, 1],
  [570, 870, 50, 36, 0, 0.9],
  [450, 950, 28, 44, 0, 0.5],
];

const rivers =
  'M370,600L420,625L450,640L480,635L500,665L520,690M340,605L380,612L405,600L440,625M315,720L360,705L410,725L440,760L450,800L440,850M350,795L400,800L440,790M430,560L470,600L500,610L540,640L548,680L530,720L520,760L525,900M600,370L590,430L560,462L510,460M585,430L600,500L575,560L590,590M560,462L620,470L660,470M650,350L690,385L740,410L770,450L760,490M690,300L700,340L740,400M600,700L640,690L680,690L720,680L760,660L800,655L880,650L905,680L960,690L1007,660M630,620L640,560L660,570L700,575L740,570M600,500L620,540L640,560M850,420L880,430L940,440L1000,430M845,380L900,370L960,390L1007,400M870,350L860,420L880,500L930,520L1007,510M950,430L960,500L1007,550M620,470L640,440L680,420L700,450L740,470M500,440L560,450M655,780L700,800L760,800M610,810L640,830L760,830M880,750L940,740L1007,735M880,790L950,800L1007,790M870,700L900,740L880,760M340,850L400,870L450,860M500,640L470,680L430,690L380,700M460,560L480,610L530,600L550,560M90,350L110,380L100,410M290,430L310,410L300,370M330,490L380,488M290,470L280,440L255,420M660,570L670,640L720,640L760,660M930,600L960,640L1007,640M700,760L780,750L840,740M400,730L420,760L400,800M480,690L510,730';
const borders =
  'M418,520L450,510L470,525L500,560L530,570L545,590L600,610L630,625L610,690L560,745L545,790L560,830L540,870L545,920M475,495L510,490L550,490L560,460L590,430L600,370M550,490L565,520L548,560L570,590L600,610M610,690L660,700L675,735L640,770L600,770L560,830M640,285L690,300M820,340L835,380L825,410L840,440L845,515L800,525L760,550L770,600L810,635L780,680L785,710M845,515L900,545L940,570L1007,580M810,635L860,645L910,640L915,680L970,690L1007,670M910,650L895,720L870,750L800,735L730,740L675,735M870,750L930,790L1007,800M800,760L870,750M870,800L920,850L1007,870M85,975L200,1000M320,930L420,960L470,950M100,290L95,320L120,325L130,340L165,345';
const cities: [number, number, number][] = [
  [235, 243, 9], [318, 295, 8], [292, 375, 15], [315, 362, 12], [308, 425, 13], [320, 385, 8], [355, 487, 14],
  [370, 480, 10], [325, 525, 5], [255, 480, 7], [165, 380, 6], [178, 312, 4], [510, 515, 14], [498, 490, 8],
  [520, 430, 6], [505, 458, 10], [600, 485, 14], [590, 500, 12], [612, 478, 6], [437, 630, 13], [445, 645, 6],
  [690, 370, 7], [795, 428, 12], [765, 245, 6], [640, 560, 6], [663, 632, 7], [720, 597, 6], [735, 670, 7],
  [660, 808, 16], [680, 815, 7], [500, 605, 5], [430, 685, 5], [318, 718, 5], [345, 850, 5], [525, 800, 6],
  [760, 300, 5], [865, 105, 5], [975, 548, 10], [990, 468, 6], [910, 433, 4], [890, 665, 6], [980, 705, 6],
  [545, 535, 6], [465, 530, 5], [760, 495, 4], [680, 435, 4], [780, 520, 4], [720, 905, 5], [605, 845, 5],
  [570, 945, 5], [410, 920, 4], [815, 880, 4], [330, 310, 4], [500, 870, 4], [645, 600, 4], [855, 530, 4],
];
const radarLight =
  'M855,-10L850,60L880,80L875,150L885,210L870,240L880,250L860,290L835,300L840,260L865,230L850,190L845,150L850,110L860,90L845,50ZM880,-10H975L960,40L945,60L950,110L920,130L910,180L890,190L875,150ZM478,28L490,25L498,55L485,65ZM512,62L525,65L520,85ZM525,30L550,28V55H540L535,42L528,55ZM705,-5H765L755,45L735,70L715,50ZM505,155L520,175L530,165L560,165L560,190L545,195L550,215L520,200ZM555,150L565,148V162ZM575,155L590,152L588,165ZM595,145L607,142L600,156ZM570,180L590,178L588,188ZM780,560L800,565L825,570L830,600L815,625L800,600L785,590ZM820,700L833,690L830,735L845,780L830,785ZM1030,740L975,770L940,860L920,915L945,940L960,890L1030,850ZM955,755L1030,750V770H960ZM890,595H912V612H893ZM920,565H935L932,588ZM990,590L1007,585V615ZM945,290L960,300L965,330L985,345L1000,320L1007,345L975,375L970,345L945,330ZM920,150L940,160L930,180ZM950,140L968,150L960,185ZM968,210H980V222H968ZM685,232L702,228L690,245ZM825,310L840,315L835,330ZM890,395V388H896ZM985,870H1007V885H985ZM990,905H1007V912H990ZM595,375L605,385L598,380ZM835,755L845,765Z';
const radarMid =
  'M890,0L940,-5L935,80L910,150L895,130L885,60ZM725,0L750,5L740,60L722,45ZM875,80L890,70L888,190L878,170ZM1030,760L985,790L955,850L945,890L975,860L1030,840ZM850,250L862,250L855,280L845,285ZM795,575L815,580L812,605L800,595Z';
const radarDeep = 'M725,30L745,28L740,42L733,50ZM948,842L960,838L962,830L974,842L970,860L955,864ZM938,885L948,872L958,876L950,898L940,905Z';

function Hills({ soft }: { soft: string }) {
  return (
    <g filter={soft}>
      {hills.map(([x, y, rx, ry, angle, opacity], i) => (
        <ellipse key={i} cx={x} cy={y} rx={rx} ry={ry} opacity={opacity} transform={`rotate(${angle} ${x} ${y})`} />
      ))}
    </g>
  );
}

function RainMap() {
  return (
    <svg viewBox="15 15 992 992" className="block w-full" role="img" aria-label="Rain radar over Europe">
      <defs>
        <filter id="coast" x="-5%" y="-5%" width="110%" height="110%" colorInterpolationFilters="sRGB">
          <feTurbulence type="fractalNoise" baseFrequency="0.06" numOctaves="2" seed="4" result="n" />
          <feDisplacementMap in="SourceGraphic" in2="n" scale="20" xChannelSelector="R" yChannelSelector="G" />
        </filter>
        <filter id="ragged" x="-5%" y="-5%" width="110%" height="110%" colorInterpolationFilters="sRGB">
          <feTurbulence type="fractalNoise" baseFrequency="0.09" numOctaves="2" seed="9" result="n" />
          <feDisplacementMap in="SourceGraphic" in2="n" scale="34" xChannelSelector="R" yChannelSelector="G" />
        </filter>
        <filter id="glow">
          <feGaussianBlur stdDeviation="3" />
        </filter>
        <filter id="soft" x="-20%" y="-20%" width="140%" height="140%" colorInterpolationFilters="sRGB">
          <feGaussianBlur stdDeviation="9" result="b" />
          <feTurbulence type="fractalNoise" baseFrequency="0.05" numOctaves="3" seed="7" result="n" />
          <feDisplacementMap in="b" in2="n" scale="60" xChannelSelector="R" yChannelSelector="G" />
        </filter>
        <filter id="relief" x="0" y="0" width="100%" height="100%" colorInterpolationFilters="sRGB">
          <feTurbulence type="fractalNoise" baseFrequency="0.05 0.08" numOctaves="3" seed="3" result="n" />
          <feDiffuseLighting in="n" surfaceScale="10" diffuseConstant="1.35" lightingColor="#ffffff">
            <feDistantLight azimuth="225" elevation="52" />
          </feDiffuseLighting>
        </filter>
        <clipPath id="land">
          <path d={land} />
        </clipPath>
        <mask id="peaks" maskUnits="userSpaceOnUse" x="0" y="0" width="1030" height="1030">
          <g fill="#ffffff">
            <Hills soft="url(#soft)" />
          </g>
        </mask>
      </defs>
      <rect x="15" y="15" width="992" height="992" fill="#2386a6" />
      <g filter="url(#coast)">
        <path d={land} fill="none" stroke="#35c8de" strokeWidth="13" strokeOpacity="0.75" filter="url(#glow)" />
        <g clipPath="url(#land)">
          <rect x="0" y="0" width="1030" height="1030" fill="#80b06a" />
          <path
            d="M640,160L720,200L760,400L700,480L560,480L520,400L640,360ZM780,90L900,60L880,250L780,260ZM730,340L1007,320V500L850,480L740,440Z"
            fill="#68a255"
            opacity="0.7"
            filter="url(#soft)"
          />
          <g fill="#efd28a">
            <Hills soft="url(#soft)" />
          </g>
          <rect x="0" y="0" width="1030" height="1030" filter="url(#relief)" className="mix-blend-multiply" opacity="0.28" />
          <g mask="url(#peaks)" className="mix-blend-multiply" opacity="0.65">
            <rect x="0" y="0" width="1030" height="1030" filter="url(#relief)" />
          </g>
          <path d={rivers} fill="none" stroke="#3d7f99" strokeWidth="3" strokeLinejoin="round" />
          <path d="M770,90L800,60L815,85L790,95ZM820,130L840,85L832,125ZM530,400L545,395L548,420L535,430Z" fill="#2386a6" />
          <g fill="#c97b5e">
            {cities.map(([x, y, r], i) => (
              <path
                key={i}
                d={`M${x - r},${y}L${x - r / 3},${y - r / 2}L${x + r / 4},${y - r}L${x + r},${y - r / 3}L${x + r / 2},${y + r / 2}L${x},${y + r}L${x - r / 2},${y + r / 3}Z`}
              />
            ))}
          </g>
        </g>
        <path d={land} fill="none" stroke="#21402c" strokeWidth="2.5" strokeDasharray="14 4 22 7" />
        <path d={borders} fill="none" stroke="#23452f" strokeWidth="3.5" strokeLinejoin="round" />
      </g>
      <g filter="url(#coast)">
        <path
          d="M150,110l6,6M165,150l8,4M175,235l-12,14M190,245l-10,20M203,240l-8,22M150,212l14,-5M640,180l20,12l-5,14M660,175l16,20M100,300l18,-12M120,295l10,16M850,895l24,22l30,28M840,880l20,26l34,28M905,960l24,20M282,595h8M292,610h8M262,712h10M165,568h4M90,134h4M325,15l10,10M690,962h6M700,985l4,6"
          fill="none"
          stroke="#1c4038"
          strokeWidth="5"
        />
      </g>
      <g filter="url(#ragged)">
        <path d={radarLight} fill="#efeeff" />
        <path d={radarMid} fill="#b4b1fb" />
        <path d={radarDeep} fill="#2b25d8" />
      </g>
      <g fontFamily="'Liberation Sans', sans-serif" fontSize="33">
        <text x="25" y="55" fill="#0b2f3f">11:00 CET (09:00 GMT)</text>
        <text x="22" y="52" fill="#ffffff" aria-hidden="true">11:00 CET (09:00 GMT)</text>
      </g>
      <rect x="27" y="957" width="40" height="40" fill="#5f7f9a" />
      <path d="M30,960L47,968L64,960L56,977L64,994L47,986L30,994L38,977Z" fill="#dfe7ee" />
      <path d="M34,966H50L62,992L48,982Z" fill="#1d4f86" />
      <path d="M72,960H222V988H72Z" fill="#c9b883" opacity="0.45" />
      <text x="76" y="983" fontSize="25" fontWeight="700" fill="#0a5a9c" fontFamily="'DejaVu Sans', sans-serif">
        meteox<tspan fill="#259be0">.com</tspan>
      </text>
      <path d="M995,988h12v19h-12z" fill="#c81e1e" />
      <path d="M999,993h8v10h-8z" fill="#e8c51e" />
    </svg>
  );
}

const ringCentre = { x: 520, y: -82 };
const windTicks = [190, 212, 240, 268, 300, 335, 370, 405, 445, 485, 525, 570, 615, 665, 715, 770, 825].flatMap((r, ri) => {
  const step = ri < 3 ? 11 + ri * 4 : 36 + ri;
  const count = Math.floor((r * 2.4) / step);
  return Array.from({ length: count }, (_, i) => {
    const angle = Math.PI / 2 + (i - (count - 1) / 2) * (step / r);
    const wobble = Math.sin(i * 12.9 + ri * 78.2) * 9;
    const x = ringCentre.x + (r + wobble) * Math.cos(angle);
    const y = ringCentre.y + (r + wobble) * Math.sin(angle);
    const dir = Math.sin(i * 0.7 + ri * 1.9) * 1.5;
    const len = ri < 3 ? 5 : 4 + Math.abs(Math.sin(i * 3.1 + ri)) * 9;
    return { x, y, dx: Math.cos(dir) * len, dy: Math.sin(dir) * len };
  });
});
const windPath = windTicks
  .filter((t) => t.y > 52 && t.y < 775 && t.x > 20 && t.x < 1002)
  .map((t) => `M${t.x.toFixed(0)},${t.y.toFixed(0)}l${t.dx.toFixed(0)},${t.dy.toFixed(0)}`)
  .join('');

const coastPath =
  'M120,52L165,70L180,62L185,90L205,110L225,125L222,165L220,220L228,245L222,270L240,268L248,245L262,235L275,240L300,215L305,200L295,190L300,160L315,125L305,115L300,95L315,60' +
  'M222,120H290L295,150L270,150L300,168M322,52L330,70L360,62L370,85L400,75L410,105L405,150L420,175L400,205L375,210L370,180L355,165L350,190L330,175L340,160L310,150L345,145L360,120L345,100L360,92M330,190L340,240L365,245L375,275L370,300L385,330L390,355' +
  'M462,52L455,75L450,100L465,120L450,160L455,190L450,215L465,250L490,270L500,240L510,215L520,190L555,170L575,150L570,120L575,95L572,52' +
  'M588,185L600,175L620,170L636,180L630,200L610,210L598,200L590,195M708,52L720,75L715,90L740,115L750,155L780,178L790,155L770,130L765,105L745,80L750,60L765,52M780,52L790,80L800,95L830,110L815,130L820,150L795,150L790,170L830,185M815,52L830,80L840,100L820,105' +
  'M820,170L815,195L830,215L820,240L850,260L890,250L875,240L900,225L880,200L890,185L865,160L840,165M870,115L905,125L915,180L930,220L950,225L945,180L990,170L1005,140M880,52L905,85L920,100L935,90L940,75L970,90L1000,85M930,150L940,130L965,115L985,130L980,170' +
  'M722,225L740,220L745,240L765,250L780,270L800,275L798,295L775,290L760,265L740,250L730,235ZM730,270L748,268L752,295L740,310L728,295ZM800,325L840,325L830,300L815,285L820,265' +
  'M840,330L860,360L880,365L905,345L920,335L925,310L945,295L965,300L975,325L960,325L945,310M925,300L940,280L1005,240M848,365L810,388L805,420L820,460L845,465L880,455L880,430L890,400L880,370M852,460L900,465L920,455L945,430L930,380L965,350L1005,345' +
  'M880,465L870,500L890,545L875,595L860,610L855,725L870,735L885,765M15,480L20,460H130L140,440L160,425L240,410L260,415L300,400L310,412L335,412L338,395L360,405L395,400L390,350L355,345L345,320L320,310L315,290L340,285L355,290L370,270M150,415L165,425L155,435L140,425M90,290L110,300L130,320L150,330L160,350L200,360L215,365L200,375L175,365L150,355L130,355L118,340L100,320L95,300M110,235L155,240L150,270L165,310L175,330M110,155L150,125L155,140L125,175ZM250,355L300,345L330,355L320,370L280,362Z' +
  'M20,680L45,685L55,715L70,730L60,735L35,722L20,720M355,125L368,125L362,138ZM260,225L268,225V235H258Z';
const statePath =
  'M15,120L60,80L75,60M30,150L90,110L110,90M15,210L60,190L130,150M45,60L110,210L160,300M30,210L90,330L130,450M15,245L80,225L110,235M60,190L80,225L60,290L20,310M20,310L60,350L45,380L90,410L100,455M60,350L110,330M90,410L150,400L160,425M45,380L15,370M110,380L150,400L190,385L240,375L300,380M180,395L240,385L235,410M250,355L235,375M80,60L220,125M20,160L120,130M15,410L90,435M50,400V455M75,380L130,370M860,610L925,592L940,520L915,450L955,465L940,500L940,520M920,592H1005M885,625L905,705L855,725M1005,655L960,605L980,592';

function JetstreamMap() {
  const { x, y } = ringCentre;
  return (
    <svg viewBox="15 18 992 798" className="block w-full" role="img" aria-label="Jet stream forecast">
      <defs>
        <clipPath id="plot">
          <rect x="15" y="52" width="992" height="727" />
        </clipPath>
        <filter id="wiggle" x="-2%" y="-2%" width="104%" height="104%" colorInterpolationFilters="sRGB">
          <feTurbulence type="fractalNoise" baseFrequency="0.05" numOctaves="1" seed="2" result="n" />
          <feDisplacementMap in="SourceGraphic" in2="n" scale="18" xChannelSelector="R" yChannelSelector="G" />
        </filter>
      </defs>
      <rect x="15" y="18" width="992" height="798" fill="#ffffff" />
      <g clipPath="url(#plot)">
        <g fill="#9f9f9f" filter="url(#wiggle)">
          <path d="M370,412L430,395L480,370L485,345L540,320L590,270L640,245L660,262L658,290L680,308L665,340L632,380L580,385L500,405L430,425L395,425Z" />
          <path d="M975,185H1020V248L960,265L925,305L895,370L865,430L845,520L850,540L830,595L765,652L768,600L785,590L800,470L805,400L830,350L880,265L930,215Z" />
          <path d="M50,52L95,68L125,85L118,105L95,118L75,90L60,75ZM170,52H185L195,75L232,110L225,130L205,120L180,85ZM445,80L465,100L475,135L462,145L455,115ZM580,100L620,70L640,52H660L640,85L600,102ZM140,118L175,130L180,160L165,172L155,150ZM175,180L188,200L180,250L165,285L160,260L168,220ZM530,250L548,235L545,260L535,280L530,270ZM305,455L325,445L318,462Z" />
        </g>
        <g fill="#bebebe" filter="url(#wiggle)">
          <path d="M400,405L480,380L545,340L600,290L640,265L650,290L630,310L640,330L600,370L520,385L440,410Z" />
          <path d="M1015,205L950,235L890,290L855,345L835,420L820,520L795,600L790,560L810,470L830,370L870,310L920,240Z" fill="#b4b4b4" />
        </g>
        <path d="M155,174H220" stroke="#a6a6a6" strokeWidth="4" />
        <g fill="none" stroke="#ff5a5a" strokeWidth="2.5">
          <circle cx={x} cy={y} r="177" strokeWidth="4" />
          <circle cx={x} cy={y} r="350" strokeDasharray="18 6" />
          <circle cx={x} cy={y} r="537" strokeDasharray="18 6" />
          <circle cx={x} cy={y} r="747" strokeDasharray="18 6" />
          <path
            d="M495,95L490,270L465,455L440,780M545,95L555,240L605,455L665,780M590,80L690,250L770,440L905,780M640,50L720,130L860,330L1007,510M820,52L1007,120M820,60L800,110L830,140M430,70L350,200L320,400L230,690M215,70L235,110L360,220M400,55L230,380L90,530L15,640M165,60L15,150M235,120L120,270L15,360"
            strokeDasharray="22 6 5 6"
          />
        </g>
        <path d={statePath} stroke="#555555" strokeWidth="2" fill="none" />
        <g filter="url(#wiggle)" fill="none" strokeLinejoin="round">
          <path d={coastPath} stroke="#383838" strokeWidth="4.5" />
        </g>
        <path
          d="M430,402L480,380L560,350L610,320L650,262L640,300L672,308L632,330L620,360L550,385L470,402L400,410M470,385L540,340L600,285L640,262M1005,208L960,222L905,265L860,325L835,400L820,500L785,590L780,620L800,615L825,520L850,430L880,340L930,270L1005,225M530,350V378M530,364H548M548,350V378"
          fill="none"
          stroke="#111111"
          strokeWidth="3"
          strokeDasharray="16 5"
        />
        <path d={windPath} fill="none" stroke="#1414b4" strokeWidth="3.5" />
        <path
          d="M480,350L560,335M560,330L680,308M500,395L660,372M440,405L520,392M880,320L920,262M835,440L850,380M805,560L822,490"
          fill="none"
          stroke="#1414b4"
          strokeWidth="3"
          strokeDasharray="14 12"
        />
        <path d="M830,325L880,370" stroke="#ffffff" strokeWidth="4" />
        <path d="M15,545L30,560L35,580M30,600V630M40,655L58,665M115,235L112,250" stroke="#333333" strokeWidth="4" strokeDasharray="10 6" fill="none" />
      </g>
      <path d="M15,50H1007" stroke="#111111" strokeWidth="3" />
      <path d="M15,779H1007" stroke="#444444" strokeWidth="3" />
      <g fontFamily="'Liberation Sans', sans-serif" fill="#111111" stroke="#111111" strokeWidth="1.5">
        <text x="22" y="46" fontSize="29">300 mb Jet Stream</text>
        <text x="998" y="46" fontSize="28" textAnchor="end">GFS Model 5 Day Forecast for 06Z SAT 14 JUL 2018</text>
        <text x="1000" y="806" fontSize="28" textAnchor="end">Wind speeds in knots</text>
        <text x="125" y="747" fontSize="25" fontStyle="italic">GFS/Meteoblue</text>
        <g fontSize="17" fontWeight="700">
          {[50, 60, 70, 80, 90, 100, 110, 120, 130, 140, 150, 160].map((n, i) => (
            <text key={n} x={46 + i * 39} y="815" textAnchor="middle">{i === 0 ? 0 : n}</text>
          ))}
        </g>
      </g>
      <g fontFamily="'Liberation Sans', sans-serif" fontSize="17" fill="#ee2b2b">
        <text x="24" y="148">45W</text>
        <text x="24" y="490">30N</text>
        <text x="186" y="776">60W</text>
        <text x="421" y="776">45W</text>
        <text x="645" y="776">30W</text>
        <text x="892" y="776">15W</text>
      </g>
      <rect x="44" y="788" width="466" height="12" fill="#9a9a9a" stroke="#111111" strokeWidth="4" />
      <path d="M46,790h38v8h-38z" fill="#ffffff" />
      <path d="M84,790h120v8h-120z" fill="#777777" />
      <path d="M204,790h160v8h-160z" fill="#bdbdbd" />
      <path d="M364,790h144v8h-144z" fill="#d8d8d8" />
    </svg>
  );
}

function Sidebar() {
  return (
    <aside className="w-64 shrink-0 border-r border-[#31383d] bg-[#3c4248]">
      <div className="flex h-[62px] items-center justify-between border-b border-[#31383d] bg-[#38464e] pr-6 pb-1 pl-4">
        <span className="text-xl">Home Assistant</span>
        <button type="button" aria-label="Close menu" className="cursor-pointer">
          <Icon name="chevronLeft" />
        </button>
      </div>
      <nav className="pt-2">
        {navItems.map(({ icon, label }, i) => (
          <a
            key={label}
            href="#"
            aria-current={i === 0 ? 'page' : undefined}
            className={`flex h-12 items-center gap-8 px-4 text-sm font-bold ${i === 0 ? 'bg-[#38464e]' : ''}`}
          >
            <Icon name={icon} className={i === 0 ? 'size-6 text-[#386eb6]' : 'size-6 text-[#20272b]'} />
            <span className="pb-0.5">{label}</span>
          </a>
        ))}
        <a href="#" className="mt-4 flex h-12 items-center gap-8 px-4 text-sm font-bold">
          <Icon name="exit" className="size-6 text-[#20272b]" />
          <span className="pb-0.5">Log out</span>
        </a>
      </nav>
      <section className="mt-1 border-t border-[#31383d] pt-[18px]">
        <h2 className="px-4 text-sm font-bold">Developer tools</h2>
        <div className="mt-[15px] flex justify-between pr-[9px] pl-2">
          {devTools.map(({ icon, label }) => (
            <button key={label} type="button" aria-label={label} className="cursor-pointer p-2 text-[#20272b]">
              <Icon name={icon} />
            </button>
          ))}
        </div>
      </section>
    </aside>
  );
}

export default function App() {
  return (
    <div className="flex min-h-screen bg-[#38474f] font-['Roboto',sans-serif] text-white">
      <Sidebar />
      <div className="min-w-0 flex-1">
        <header className="bg-[#386eb6]">
          <div className="flex h-[61px] items-center justify-between pr-6 pb-1 pl-20">
            <h1 className="text-xl">Home</h1>
            <button type="button" aria-label="Start voice input" className="cursor-pointer">
              <Icon name="mic" />
            </button>
          </div>
          <nav className="h-12 overflow-hidden pl-[68px] text-sm leading-none whitespace-nowrap">
            {tabs.map(({ icon, label }, i) => (
              <React.Fragment key={label}>
                <a
                  href="#"
                  aria-label={label}
                  className={`inline-flex h-12 w-12 items-center justify-center border-b-2 pt-0.5 align-top ${
                    i === 4 ? 'border-white text-white' : 'border-transparent text-white/80'
                  }`}
                >
                  <Icon name={icon} />
                </a>{' '}
              </React.Fragment>
            ))}
          </nav>
        </header>
        <main className="grid grid-cols-3 items-start gap-2 p-2">
          <EntitiesCard title="Almanac" rows={almanac} />
          <EntitiesCard title="Weather" rows={weather} />
          <div className="flex flex-col gap-2">
            <PictureCard title="Rain Radar">
              <RainMap />
            </PictureCard>
            <PictureCard title="Jetstream">
              <JetstreamMap />
            </PictureCard>
          </div>
        </main>
      </div>
    </div>
  );
}
